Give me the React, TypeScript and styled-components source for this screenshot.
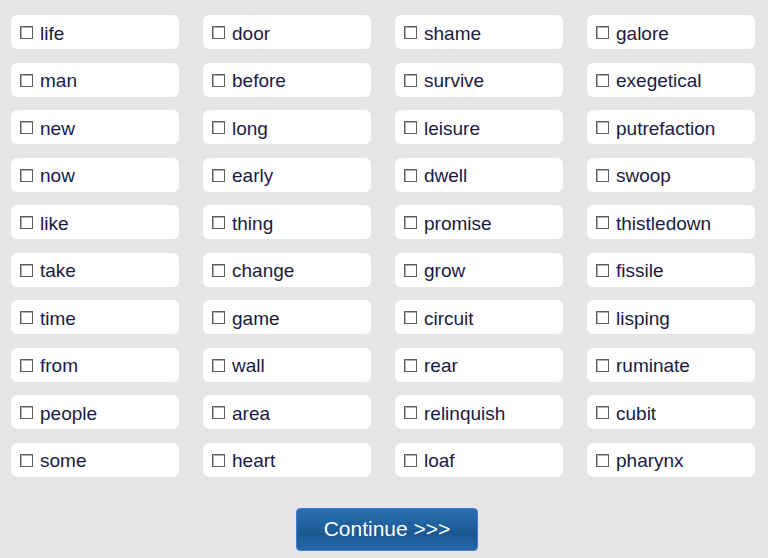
import React from 'react';
import styled, { createGlobalStyle } from 'styled-components';

const GlobalStyle = createGlobalStyle`
  html, body {
    margin: 0;
    padding: 0;
    background: #e6e6e6;
    font-family: "Liberation Sans", Arial, sans-serif;
  }
`;

const words: string[][] = [
  ['life', 'door', 'shame', 'galore'],
  ['man', 'before', 'survive', 'exegetical'],
  ['new', 'long', 'leisure', 'putrefaction'],
  ['now', 'early', 'dwell', 'swoop'],
  ['like', 'thing', 'promise', 'thistledown'],
  ['take', 'change', 'grow', 'fissile'],
  ['time', 'game', 'circuit', 'lisping'],
  ['from', 'wall', 'rear', 'ruminate'],
  ['people', 'area', 'relinquish', 'cubit'],
  ['some', 'heart', 'loaf', 'pharynx'],
];

const Page = styled.div`
  width: 768px;
  height: 558px;
  box-sizing: border-box;
  padding: 15px 13px 0 11px;
  display: flex;
  flex-direction: column;
`;

const WordGrid = styled.div`
  display: grid;
  grid-template-columns: repeat(4, 168px);
  grid-auto-rows: 34px;
  column-gap: 24px;
  row-gap: 13.5px;
`;

const WordCell = styled.label`
  display: flex;
  align-items: center;
  background: #ffffff;
  border-radius: 6px;
  padding: 3px 0 0 9px;
  box-sizing: border-box;
  color: #1a1a44;
  font-size: 19px;
  cursor: pointer;
`;

const Box = styled.span`
  display: inline-block;
  width: 11px;
  height: 11px;
  border: 1px solid #5e5e5e;
  box-shadow: inset 1px 1px 0 #b0b0b0;
  margin: 0 7px 2px 0;
`;

const ButtonRow = styled.div`
  display: flex;
  justify-content: center;
  margin-top: 31px;
  padding-left: 8px;
`;

const ContinueButton = styled.button`
  width: 182px;
  height: 43px;
  padding: 0;
  border: 1px solid #4a78d6;
  border-radius: 4px;
  background: linear-gradient(to bottom, #2b70b0 0%, #1e5f9c 45%, #1a5892 60%, #2769a8 100%);
  color: #ffffff;
  font-family: "Liberation Sans", Arial, sans-serif;
  font-size: 21px;
  cursor: pointer;
`;

export default function App() {
  return (
    <Page>
      <GlobalStyle />
      <WordGrid>
        {words.flat().map((w) => (
          <WordCell key={w}>
            <Box />
            {w}
          </WordCell>
        ))}
      </WordGrid>
      <ButtonRow>
        <ContinueButton type="button">Continue &gt;&gt;&gt;</ContinueButton>
      </ButtonRow>
    </Page>
  );
}
